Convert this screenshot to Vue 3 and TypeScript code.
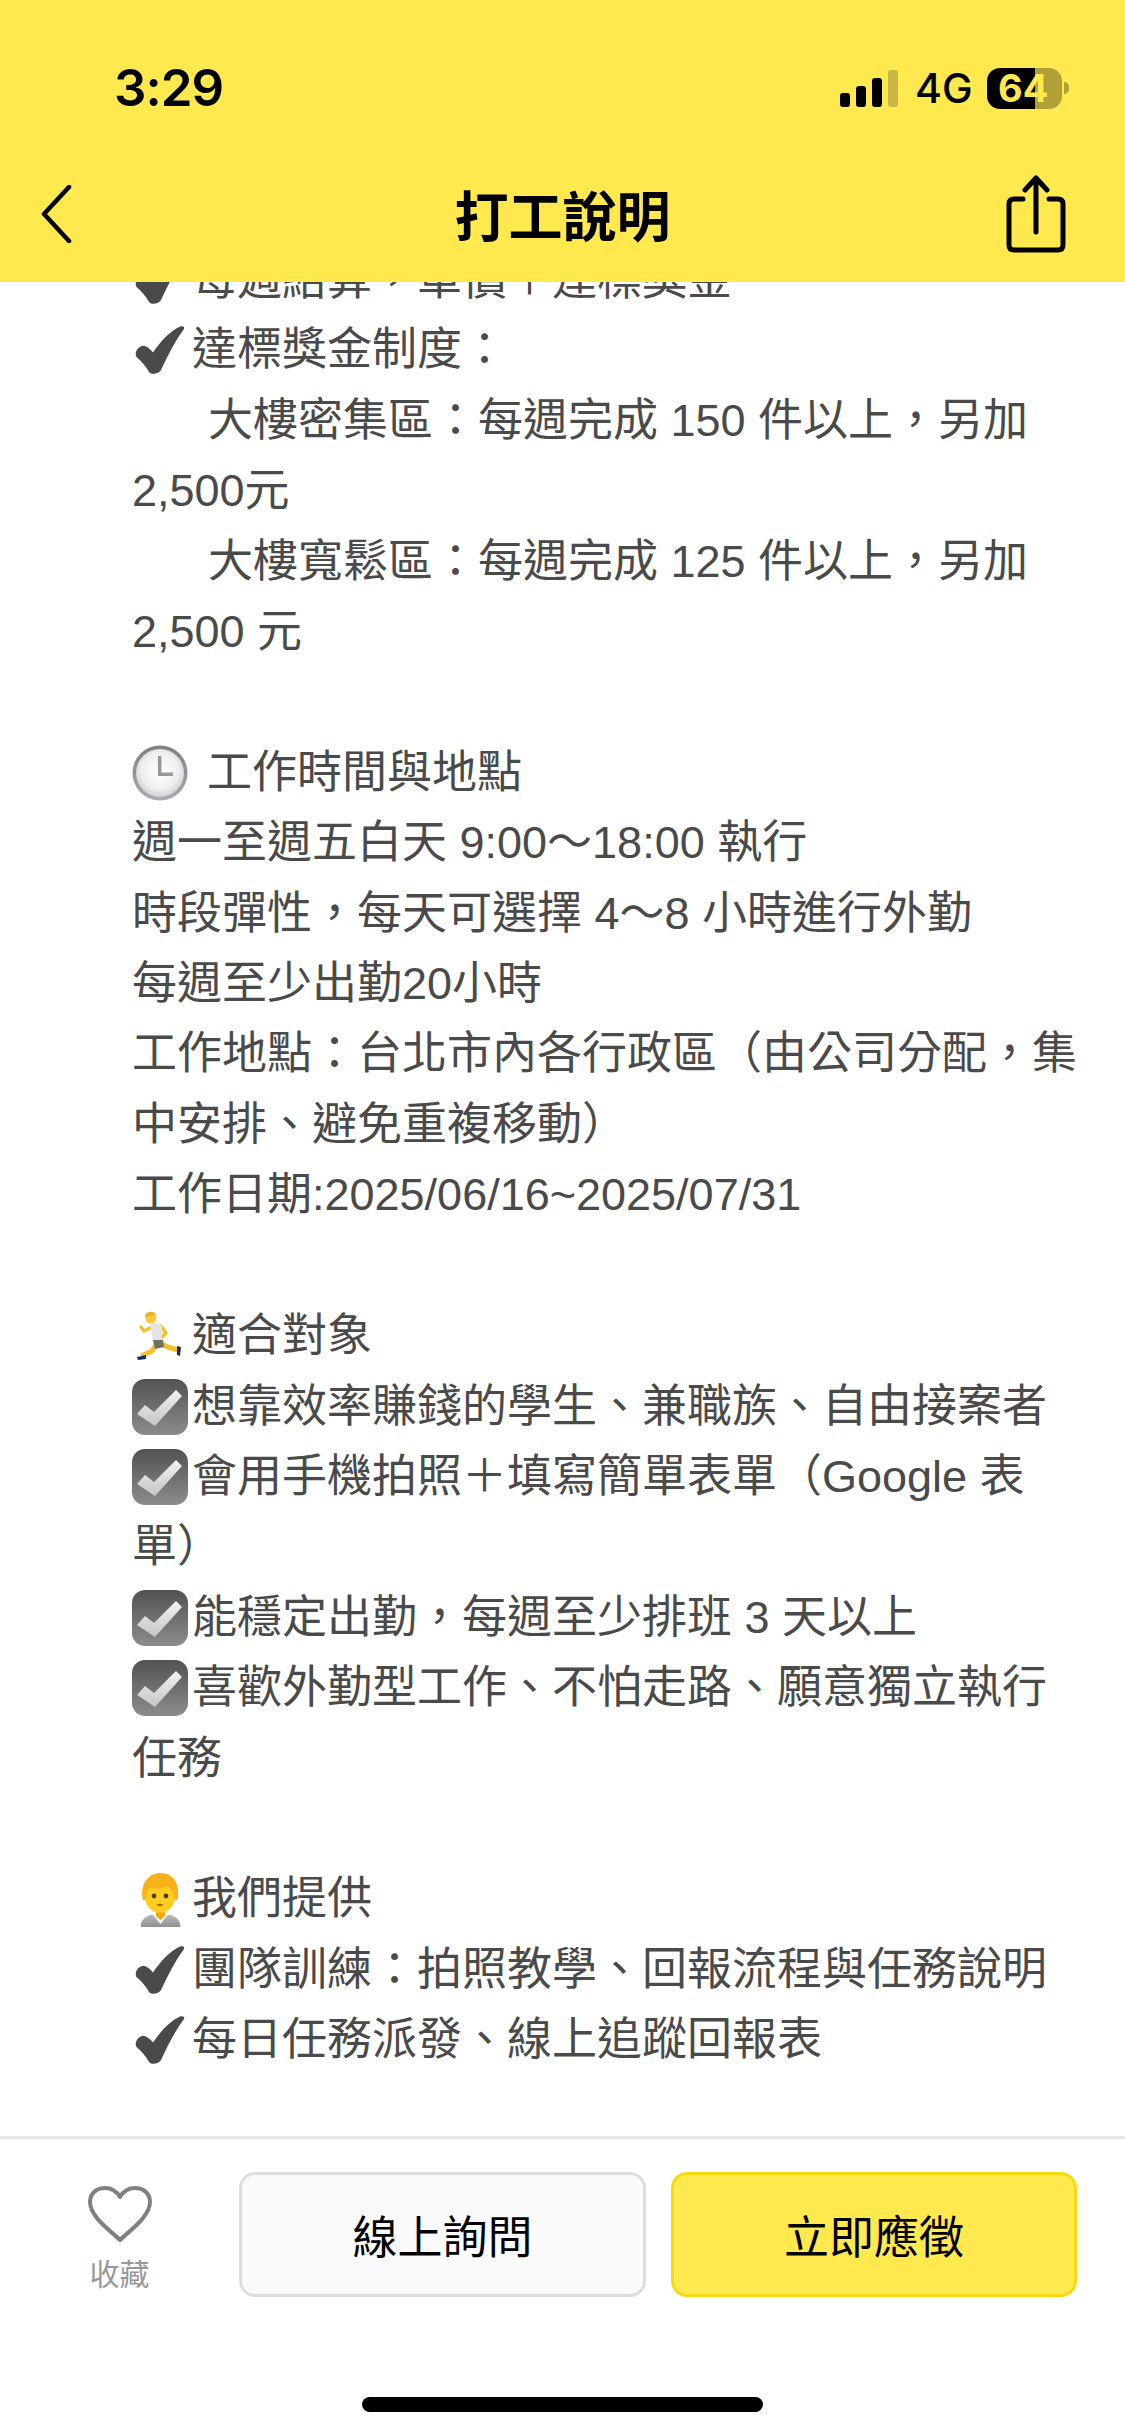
<script setup lang="ts">
type Line = { text: string; icon?: string; indent?: boolean; gap?: boolean };

const lines: Line[] = [
  { icon: 'check', text: '每週結算，單價＋達標獎金' },
  { icon: 'check', text: '達標獎金制度：' },
  { indent: true, text: '大樓密集區：每週完成 150 件以上，另加 2,500元' },
  { indent: true, text: '大樓寬鬆區：每週完成 125 件以上，另加 2,500 元' },
  { text: '' },
  { icon: 'clock', gap: true, text: '工作時間與地點' },
  { text: '週一至週五白天 9:00～18:00 執行' },
  { text: '時段彈性，每天可選擇 4～8 小時進行外勤' },
  { text: '每週至少出勤20小時' },
  { text: '工作地點：台北市內各行政區（由公司分配，集中安排、避免重複移動）' },
  { text: '工作日期:2025/06/16~2025/07/31' },
  { text: '' },
  { icon: 'runner', text: '適合對象' },
  { icon: 'box', text: '想靠效率賺錢的學生、兼職族、自由接案者' },
  { icon: 'box', text: '會用手機拍照＋填寫簡單表單（Google 表單）' },
  { icon: 'box', text: '能穩定出勤，每週至少排班 3 天以上' },
  { icon: 'box', text: '喜歡外勤型工作、不怕走路、願意獨立執行任務' },
  { text: '' },
  { icon: 'worker', text: '我們提供' },
  { icon: 'check', text: '團隊訓練：拍照教學、回報流程與任務說明' },
  { icon: 'check', text: '每日任務派發、線上追蹤回報表' },
];
</script>

<template>
  <div class="screen">
    <svg class="defs" width="0" height="0" aria-hidden="true">
      <defs>
        <linearGradient id="boxFill" x1="0" y1="0" x2="0" y2="1">
          <stop offset="0" stop-color="#525252" />
          <stop offset="1" stop-color="#8c8c8c" />
        </linearGradient>
        <linearGradient id="tickFill" x1="0" y1="0" x2="0" y2="1">
          <stop offset="0" stop-color="#f4f4f4" />
          <stop offset="1" stop-color="#c4c4c4" />
        </linearGradient>
        <radialGradient id="faceFill" cx="0.5" cy="0.45" r="0.6">
          <stop offset="0" stop-color="#ffffff" />
          <stop offset="0.65" stop-color="#eeeef0" />
          <stop offset="1" stop-color="#c6c6cb" />
        </radialGradient>
        <linearGradient id="rimFill" x1="0" y1="0" x2="0" y2="1">
          <stop offset="0" stop-color="#7f8086" />
          <stop offset="1" stop-color="#a9aab0" />
        </linearGradient>
        <linearGradient id="suitFill" x1="0" y1="0" x2="0" y2="1">
          <stop offset="0" stop-color="#b9b9b9" />
          <stop offset="1" stop-color="#8f8f8f" />
        </linearGradient>
        <symbol id="i-check" viewBox="0 0 60 56">
          <path d="M3.700 32C4 27 9 23 12.500 24C16 25 19 28 21 30.500C28 20 38 9 48 4.500C51 3.500 53 5 52 7C43 19 36 33 29 48C27 52 19 53 17 50C14 44 9 39 5.500 36C4.500 35 3.700 34 3.700 32Z" fill="#4a4a4a" />
        </symbol>
        <symbol id="i-box" viewBox="0 0 60 56">
          <rect width="56" height="56" rx="13" fill="url(#boxFill)" />
          <path d="M5 35L13 26L22 33L44 11L50 17L23 47Z" fill="url(#tickFill)" />
        </symbol>
        <symbol id="i-clock" viewBox="0 0 60 56">
          <circle cx="28" cy="28" r="27.500" fill="url(#rimFill)" />
          <circle cx="28" cy="28" r="24" fill="url(#faceFill)" />
          <path d="M27.700 11V29.300H41" fill="none" stroke="#98989c" stroke-width="3.500" />
        </symbol>
        <symbol id="i-runner" viewBox="0 0 60 56">
          <path d="M25 35L20 43L11 47" fill="none" stroke="#f4c02e" stroke-width="5" stroke-linejoin="round" stroke-linecap="round" />
          <path d="M27 35L36 39L46 42" fill="none" stroke="#f4c02e" stroke-width="5" stroke-linejoin="round" stroke-linecap="round" />
          <path d="M5 49L14 47L14 51L6 52Z" fill="#1c2a5a" />
          <path d="M45 38L49 39L48 48L45 47Z" fill="#1c2a5a" />
          <path d="M20 19L12 23L9 19" fill="none" stroke="#f4c02e" stroke-width="3.500" stroke-linejoin="round" stroke-linecap="round" />
          <path d="M29 18L34 25L29 30" fill="none" stroke="#f4c02e" stroke-width="3.500" stroke-linejoin="round" stroke-linecap="round" />
          <path d="M18 17C22 14 28 15 30 18L30 33L21 33Z" fill="#e4e4e4" />
          <path d="M21 32L31 32L32 39L23 41Z" fill="#6f6f66" />
          <circle cx="19" cy="10" r="5.500" fill="#f8c83f" />
          <path d="M13 9C13 4 20 2 24 6C22 8 17 8 13 9Z" fill="#f0ae24" />
        </symbol>
        <symbol id="i-worker" viewBox="0 0 60 56">
          <path d="M8.700 56C9 50 11 47 18 44L39 44C46 47 48 50 48.500 56Z" fill="url(#suitFill)" />
          <path d="M21 44L28.500 53L36 44Z" fill="#f6f6f6" />
          <path d="M24 38H33V45L28.500 49L24 45Z" fill="#f2a900" />
          <ellipse cx="28" cy="26" rx="15" ry="16" fill="#ffcd1f" />
          <path d="M10.500 27C8 10 19 2 28 2C41 2 48 12 46 27C45 31 42 29 41.500 24C40 19 38 17 35 15C30 18 22 18 18 17C16 19 15 21 15 24C14 30 11 31 10.500 27Z" fill="#f7b21a" />
          <circle cx="22" cy="25" r="2.400" fill="#5b3a12" />
          <circle cx="34" cy="25" r="2.400" fill="#5b3a12" />
          <ellipse cx="28" cy="34" rx="3" ry="1.200" fill="#b06a10" />
        </symbol>
      </defs>
    </svg>

    <header class="top">
      <div class="status">
        <span class="time">3:29</span>
        <div class="status-right">
          <div class="signal">
            <i class="bar b1"></i>
            <i class="bar b2"></i>
            <i class="bar b3"></i>
            <i class="bar b4"></i>
          </div>
          <span class="net">4G</span>
          <div class="battery"><span>64</span></div>
          <i class="nub"></i>
        </div>
      </div>
      <nav class="nav">
        <svg class="back" viewBox="0 0 32 58" width="32" height="58">
          <path d="M29 2L4 29L29 56" fill="none" stroke="#000" stroke-width="4.500" stroke-linecap="round" stroke-linejoin="round" />
        </svg>
        <h1>打工說明</h1>
        <svg class="share" viewBox="0 0 62 80" width="62" height="80">
          <path d="M18 24H9C5.500 24 4 25.500 4 29V70C4 73.500 5.500 75 9 75H53C56.500 75 58 73.500 58 70V29C58 25.500 56.500 24 53 24H44" fill="none" stroke="#000" stroke-width="5" stroke-linecap="round" />
          <path d="M31 57V3M20 15L31 3L42 15" fill="none" stroke="#000" stroke-width="5" stroke-linecap="round" stroke-linejoin="round" />
        </svg>
      </nav>
    </header>

    <main class="body">
      <div class="copy">
        <p
          v-for="(line, i) in lines"
          :key="i"
          class="line"
          :class="{ indent: line.indent }"
        >
          <svg v-if="line.icon" class="emoji" :class="{ gap: line.gap }" width="60" height="56">
            <use :href="`#i-${line.icon}`" />
          </svg>{{ line.text }}<br v-if="!line.text" />
        </p>
      </div>
    </main>

    <footer class="bottom">
      <div class="actions">
        <div class="fav">
          <svg viewBox="0 0 66 58" width="66" height="58">
            <path d="M33 55C24 46 3 32 3 17C3 8 10 3 18 3C25 3 30 7 33 12C36 7 41 3 48 3C56 3 63 8 63 17C63 32 42 46 33 55Z" fill="none" stroke="#808080" stroke-width="4" stroke-linejoin="round" />
          </svg>
          <span>收藏</span>
        </div>
        <button class="btn ghost">線上詢問</button>
        <button class="btn main-btn">立即應徵</button>
      </div>
      <div class="home"></div>
    </footer>
  </div>
</template>

<style scoped>
.screen {
  width: 1125px;
  height: 2436px;
  display: flex;
  flex-direction: column;
  background: #fff;
  overflow: hidden;
  font-family: "Liberation Sans", "Noto Sans CJK TC", sans-serif;
  color: #4a4a4a;
}

.defs {
  position: absolute;
}

.top {
  height: 282px;
  flex: none;
  background: #ffe94f;
  color: #000;
  position: relative;
  z-index: 2;
}

.status {
  height: 68px;
  padding: 54px 56px 0 114px;
  display: flex;
  justify-content: space-between;
  align-items: center;
  font-family: Inter, sans-serif;
}

.time {
  font-size: 51px;
  font-weight: 600;
  letter-spacing: -1px;
  line-height: 40px;
}

.status-right {
  display: flex;
  align-items: center;
}

.signal {
  display: flex;
  align-items: flex-end;
  gap: 6px;
  height: 37px;
}

.bar {
  width: 10px;
  background: #000;
  border-radius: 3px;
}

.b1 { height: 14px; }
.b2 { height: 21px; }
.b3 { height: 29px; }
.b4 { height: 37px; background: #c9b845; }

.net {
  margin-left: 17px;
  width: 72px;
  font-size: 41px;
  font-weight: 500;
  line-height: 40px;
}

.battery {
  width: 75px;
  height: 41px;
  border-radius: 13px;
  background: linear-gradient(90deg, #000 48px, #b0a037 48px);
  color: #ffe94f;
  font-size: 38px;
  font-weight: 700;
  line-height: 41px;
  padding-left: 11px;
  box-sizing: border-box;
}

.nub {
  width: 5px;
  height: 12px;
  margin-left: 2px;
  background: #b0a037;
  border-radius: 0 5px 5px 0;
}

.nav {
  height: 160px;
  box-sizing: border-box;
  padding: 24px 58px 0;
  display: grid;
  grid-template-columns: 1fr auto 1fr;
  align-items: center;
}

.nav h1 {
  margin: 0;
  font-size: 54px;
  font-weight: 700;
  line-height: 60px;
  font-family: "Noto Sans CJK TC", sans-serif;
}

.back {
  margin-left: -18px;
}

.share {
  justify-self: end;
  margin-top: 2px;
}

.body {
  flex: 1;
  min-height: 0;
  overflow: hidden;
}

.copy {
  margin-top: -37px;
  padding: 0 44px 0 132px;
}

.line {
  margin: 0;
  font-size: 45px;
  line-height: 70.4px;
}

.indent {
  text-indent: 76px;
}

.emoji {
  vertical-align: -13px;
}

.emoji.gap {
  margin-right: 15px;
}

.bottom {
  flex: none;
  height: 300px;
  border-top: 3px solid #e6e6e6;
  box-sizing: border-box;
}

.actions {
  padding: 33px 48px 0 0;
  display: flex;
  align-items: flex-start;
}

.fav {
  width: 239px;
  flex: none;
  display: flex;
  flex-direction: column;
  align-items: center;
  padding-top: 13px;
  color: #999;
  font-size: 30px;
  font-family: "Noto Sans CJK TC", sans-serif;
  line-height: 40px;
}

.fav span {
  margin-top: 9px;
}

.btn {
  width: 407px;
  height: 125px;
  border-radius: 16px;
  border: 3px solid #ddd;
  background: #fafafa;
  color: #000;
  font-size: 45px;
  font-family: "Noto Sans CJK TC", sans-serif;
  padding: 0;
  box-sizing: border-box;
}

.main-btn {
  margin-left: 25px;
  width: 406px;
  background: #ffe94f;
  border-color: #f6da10;
}

.home {
  width: 401px;
  height: 15px;
  margin: 100px auto 0;
  background: #000;
  border-radius: 8px;
}
</style>

<style>
html, body {
  margin: 0;
  background: #fff;
}
</style>
